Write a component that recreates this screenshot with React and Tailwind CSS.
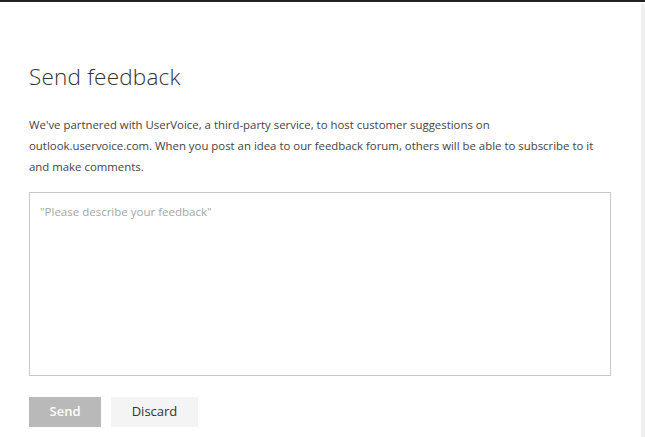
export default function App() {
  return (
    <div className="relative w-[645px] h-[437px] overflow-hidden bg-white font-['Open_Sans','Liberation_Sans',sans-serif] text-[#333]">
      <div className="h-[2px] bg-[#222]" />
      <div className="flex">
        <div className="flex-1 pl-[29px] pr-[30px]">
          <h1 className="mt-[60px] text-[22.5px] leading-[30px] font-light text-[#333] tracking-[0.2px]">
            Send feedback
          </h1>
          <p className="mt-[22px] text-[11.4px] leading-[21px] text-[#444]">
            <span className="block">
              We've partnered with UserVoice, a third-party service, to host customer suggestions on
            </span>
            <span className="block">
              outlook.uservoice.com. When you post an idea to our feedback forum, others will be able to subscribe to it
            </span>
            <span className="block">and make comments.</span>
          </p>
          <textarea
            placeholder={'"Please describe your feedback"'}
            className="mt-[15px] block w-[582px] h-[184px] resize-none border border-[#c8c8c8] px-[10px] py-[10px] text-[11.5px] leading-[18px] outline-none placeholder:text-[#a6a6a6]"
          />
          <div className="mt-[21px] flex gap-[10px]">
            <button className="w-[72px] h-[30px] bg-[#b9b9b9] text-white text-[13px] font-semibold">
              Send
            </button>
            <button className="w-[87px] h-[30px] bg-[#f4f4f4] text-[#333] text-[13px]">
              Discard
            </button>
          </div>
        </div>
        <div className="w-[4px] h-[435px] mt-[2px] bg-[#f0f0f0]" />
      </div>
    </div>
  );
}
